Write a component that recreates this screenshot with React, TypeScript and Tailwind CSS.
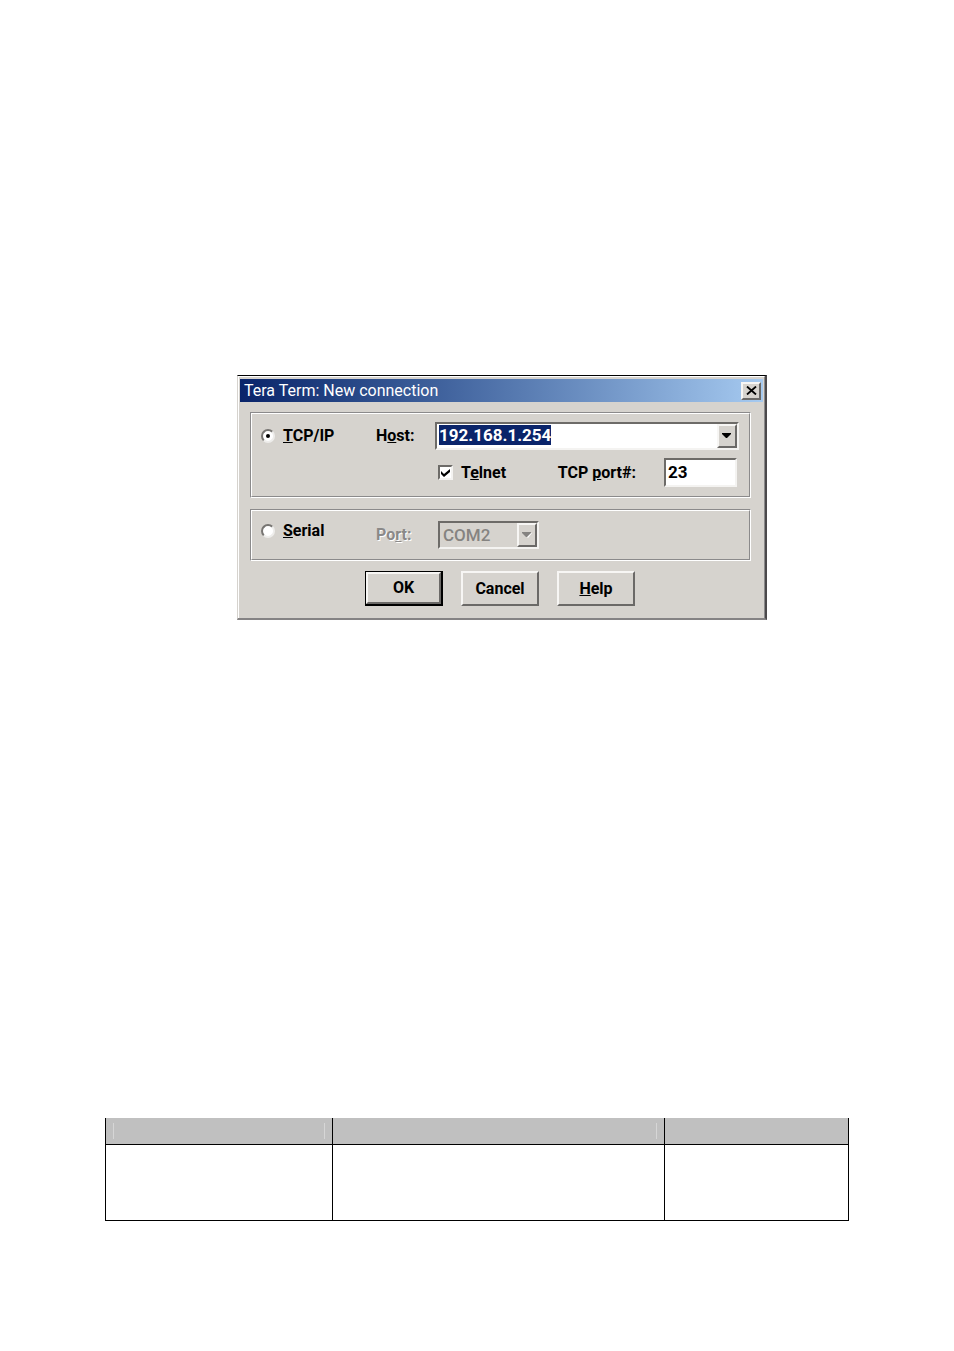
import { useEffect, useRef } from "react";
import type { ReactNode } from "react";

const sunken =
  "border-2 border-t-[#6d6b68] border-l-[#6d6b68] border-r-[#f4f3f1] border-b-[#f4f3f1]";
const raised =
  "border-2 border-t-[#f7f6f4] border-l-[#f7f6f4] border-r-[#6b6967] border-b-[#6b6967]";

interface GroupProps {
  label: string;
  children: ReactNode;
  className: string;
}

// Etched frame: a gray line with a white line next to it
function Group({ label, children, className }: GroupProps) {
  return (
    <div role="group" aria-label={label} className="border border-white border-t-[#8b8a8b] border-l-[#8b8a8b]">
      <div className={`border border-[#8b8a8b] border-t-white border-l-white ${className}`}>
        {children}
      </div>
    </div>
  );
}

interface RadioProps {
  id: string;
  checked?: boolean;
  children: ReactNode;
}

function Radio({ id, checked, children }: RadioProps) {
  return (
    <div className="flex items-center gap-2">
      <input
        type="radio"
        id={id}
        name="connection"
        defaultChecked={checked}
        className="appearance-none flex items-center justify-center w-3.5 h-3.5 shrink-0 rounded-full bg-white border-2 border-t-[#777572] border-l-[#777572] border-r-[#eeedeb] border-b-[#eeedeb] checked:before:w-1 checked:before:h-1 checked:before:rounded-full checked:before:bg-black checked:before:content-['']"
      />
      <label htmlFor={id}>{children}</label>
    </div>
  );
}

function Arrow({ disabled }: { disabled?: boolean }) {
  return (
    <svg width="10" height="6" viewBox="0 0 10 6" aria-hidden="true">
      {disabled && <path d="M1 1h9L6 6z" fill="#fff" />}
      <path d="M0 0h9v1L5 5H4L0 1z" fill={disabled ? "#858381" : "#000"} />
    </svg>
  );
}

function PushButton({ children, isDefault }: { children: ReactNode; isDefault?: boolean }) {
  return (
    <button
      type="button"
      className={`w-[78px] h-[35px] ${isDefault ? "border border-r-2 border-b-2 border-black" : ""}`}
    >
      <span className={`flex items-center justify-center w-full h-full ${raised}`}>
        <span>{children}</span>
      </span>
    </button>
  );
}

function ConnectionDialog() {
  const hostRef = useRef<HTMLInputElement>(null);

  useEffect(() => {
    hostRef.current?.focus();
    hostRef.current?.select();
  }, []);

  return (
    <section
      role="dialog"
      aria-label="New connection"
      className="ml-[237px] w-[530px] bg-[#d6d3ce] border-t border-t-black border-l border-l-[#d6d3ce] border-r-2 border-r-[#4b494b] border-b-2 border-b-[#858384] text-black"
    >
      <div className="border-t border-l border-white border-r border-r-[#8b8a8b] pt-0.5 pl-px pr-px">
        <header className="flex items-center justify-between h-[23px] pl-1 pr-0.5 bg-linear-to-r from-[#0a246a] to-[#a6caf0]">
          <h1 className="text-base leading-5 text-white">Tera Term: New connection</h1>
          <button
            type="button"
            aria-label="Close"
            className={`flex items-center justify-center w-5 h-[18px] bg-[#d6d3ce] ${raised}`}
          >
            <svg width="11" height="9" viewBox="0 0 11 9" aria-hidden="true">
              <path d="M1 0.5L10 8.5M10 0.5L1 8.5" stroke="#000" strokeWidth="1.8" />
            </svg>
          </button>
        </header>

        <form className="pt-2.5 pl-2.5 pr-3 pb-3 text-base leading-5 font-bold">
          <Group label="TCP/IP" className="grid grid-cols-[115px_59px_1fr] items-center gap-y-2 pt-2 pb-[9px] pl-[9px] pr-2.5">
            <Radio id="tcpip" checked><u>T</u>CP/IP</Radio>
            <label htmlFor="host">H<u>o</u>st:</label>
            <div className={`flex h-7 bg-white ${sunken}`}>
              <input
                ref={hostRef}
                id="host"
                type="text"
                defaultValue="192.168.1.254"
                className="flex-1 min-w-0 pl-0.5 pb-0.5 text-[17px] leading-5 outline-none selection:bg-[#0a246a] selection:text-white"
              />
              <button
                type="button"
                aria-label="Show hosts"
                className={`flex items-center justify-center w-5 bg-[#d6d3ce] ${raised}`}
              >
                <Arrow />
              </button>
            </div>

            <div className="col-start-3 flex items-center justify-between pl-[3px] pr-0.5">
              <div className="flex items-center gap-2">
                <span className="relative flex">
                  <input
                    type="checkbox"
                    id="telnet"
                    defaultChecked
                    className={`appearance-none w-[15px] h-[15px] bg-white ${sunken}`}
                  />
                  <svg className="absolute top-1 left-[3px] pointer-events-none" width="9" height="8" viewBox="0 0 9 8" aria-hidden="true">
                    <path d="M0 2l3 3 6-5v3L3 8 0 5z" fill="#000" />
                  </svg>
                </span>
                <label htmlFor="telnet">T<u>e</u>lnet</label>
              </div>
              <div className="flex items-center gap-7">
                <label htmlFor="port">TCP <u>p</u>ort#:</label>
                <input
                  id="port"
                  type="text"
                  defaultValue="23"
                  className={`w-[73px] h-[29px] pl-0.5 pb-0.5 bg-white text-[17px] ${sunken}`}
                />
              </div>
            </div>
          </Group>

          <div className="h-[11px]" />

          <Group label="Serial" className="grid grid-cols-[115px_62px_1fr] items-start py-2.5 pl-[9px] pr-2.5">
            <Radio id="serial"><u>S</u>erial</Radio>
            <label htmlFor="com" className="self-center text-[#8b8988] [text-shadow:1px_1px_0_#fff]">
              Po<u>r</u>t:
            </label>
            <div className="relative w-[101px] h-7">
              <select
                id="com"
                disabled
                className={`appearance-none w-full h-full pl-[3px] opacity-100 text-[17px] font-medium text-[#858381] ${sunken}`}
              >
                <option>COM2</option>
              </select>
              <span className={`absolute top-0.5 right-0.5 flex items-center justify-center w-5 h-6 bg-[#d6d3ce] pointer-events-none ${raised}`}>
                <Arrow disabled />
              </span>
            </div>
          </Group>

          <div className="flex gap-[18px] pt-2.5 pl-[115px]">
            <PushButton isDefault>OK</PushButton>
            <PushButton>Cancel</PushButton>
            <PushButton><u>H</u>elp</PushButton>
          </div>
        </form>
      </div>
    </section>
  );
}

function HeaderCell({ sides }: { sides: string }) {
  return (
    <th className="h-[26px] p-0 px-[7px] border border-t-0 border-black">
      <div className={`h-4 border-[#d6d6d6] ${sides}`} />
    </th>
  );
}

export default function App() {
  return (
    <main className="min-h-screen bg-white pt-[375px] pb-32 font-[Roboto,'Liberation_Sans',sans-serif]">
      <ConnectionDialog />

      <div className="mt-[498px] mx-[105px]">
        <table className="w-full table-fixed border-collapse">
          <colgroup>
            <col className="w-[227px]" />
            <col className="w-[332px]" />
            <col />
          </colgroup>
          <thead className="bg-[#c0c0c0]">
            <tr>
              <HeaderCell sides="border-x" />
              <HeaderCell sides="border-r" />
              <HeaderCell sides="border-0" />
            </tr>
          </thead>
          <tbody>
            <tr>
              <td className="h-[76px] border border-black" />
              <td className="border border-black" />
              <td className="border border-black" />
            </tr>
          </tbody>
        </table>
      </div>
    </main>
  );
}
